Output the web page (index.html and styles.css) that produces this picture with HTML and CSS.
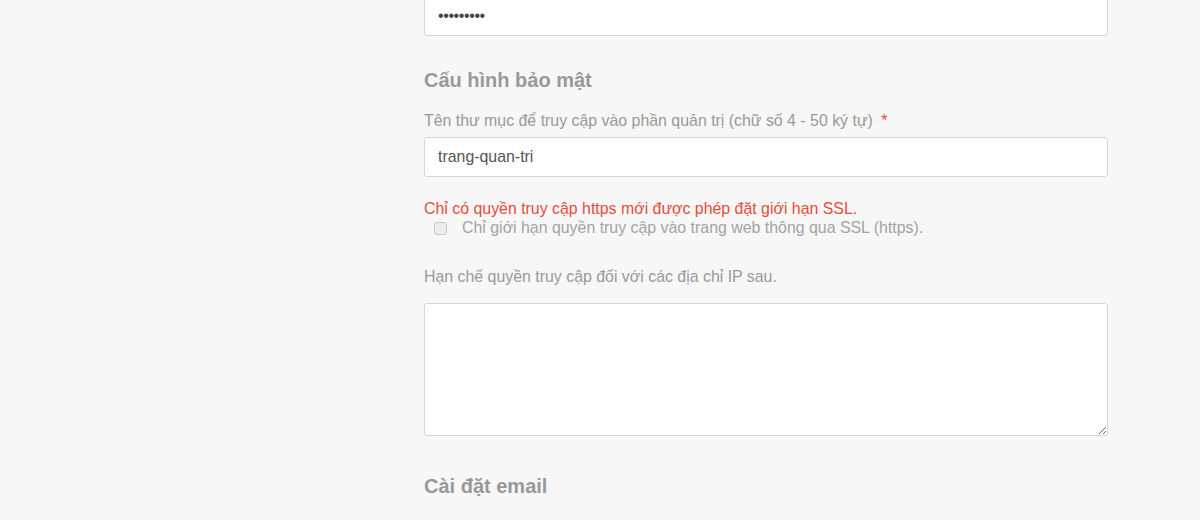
FILE: index.html
```html
<!DOCTYPE html>
<html lang="vi">
<head>
<meta charset="utf-8">
<link rel="stylesheet" href="styles.css">
</head>
<body>
<div class="page">
  <div class="side"></div>
  <main class="form">
    <div class="field first">
      <input class="input pw" type="text" value="•••••••••" readonly>
    </div>
    <h3 class="section-title sec1">Cấu hình bảo mật</h3>
    <div class="field">
      <label class="label">Tên thư mục để truy cập vào phần quản trị (chữ số 4 - 50 ký tự) <span class="req">*</span></label>
      <input class="input" type="text" value="trang-quan-tri" readonly>
    </div>
    <div class="ssl">
      <p class="warn">Chỉ có quyền truy cập https mới được phép đặt giới hạn SSL.</p>
      <label class="check"><span class="box"></span><span>Chỉ giới hạn quyền truy cập vào trang web thông qua SSL (https).</span></label>
    </div>
    <div class="field ip">
      <label class="label">Hạn chế quyền truy cập đối với các địa chỉ IP sau.</label>
      <textarea class="textarea"></textarea>
    </div>
    <h3 class="section-title sec2">Cài đặt email</h3>
  </main>
</div>
</body>
</html>
```

FILE: styles.css
```css
html, body {
  margin: 0;
  padding: 0;
  background: #f7f7f7;
  font-family: "Liberation Sans", Arial, sans-serif;
}
.page {
  display: grid;
  grid-template-columns: 424px 684px;
  margin-top: -4px;
}
.form {
  display: flex;
  flex-direction: column;
}
.field {
  display: flex;
  flex-direction: column;
}
.input {
  box-sizing: border-box;
  height: 40px;
  width: 100%;
  border: 1px solid #d3d6d8;
  border-radius: 3px;
  background: #fff;
  padding: 0 13px;
  font-family: "Liberation Sans", Arial, sans-serif;
  font-size: 15.9px;
  color: #555;
  outline: none;
}
.pw {
  font-size: 16px;
  letter-spacing: -0.4px;
  color: #444;
}
.section-title {
  margin: 0;
  font-size: 20px;
  font-weight: bold;
  color: #999;
  line-height: 24px;
}
.sec1 {
  margin-top: 32px;
}
.field .label {
  display: block;
  font-size: 15.9px;
  color: #999;
  line-height: 20px;
  margin: 19px 0 6px;
}
.req {
  color: #e74c3c;
  margin-left: 4px;
}
.ssl {
  margin-top: 23px;
}
.warn {
  margin: 0;
  font-size: 15.9px;
  line-height: 18px;
  color: #e74c3c;
}
.check {
  display: flex;
  align-items: center;
  gap: 15px;
  padding-left: 10px;
  font-size: 15.9px;
  color: #a3a3a3;
  line-height: 20px;
}
.box {
  width: 11px;
  height: 11px;
  border: 1px solid #c8c8c8;
  border-radius: 3px;
  background: #ececec;
}
.ip .label {
  margin: 29px 0 16px;
}
.textarea {
  box-sizing: border-box;
  height: 133px;
  width: 100%;
  border: 1px solid #d3d6d8;
  border-radius: 3px;
  background: #fff;
  resize: vertical;
}
.sec2 {
  margin-top: 38px;
}
```
